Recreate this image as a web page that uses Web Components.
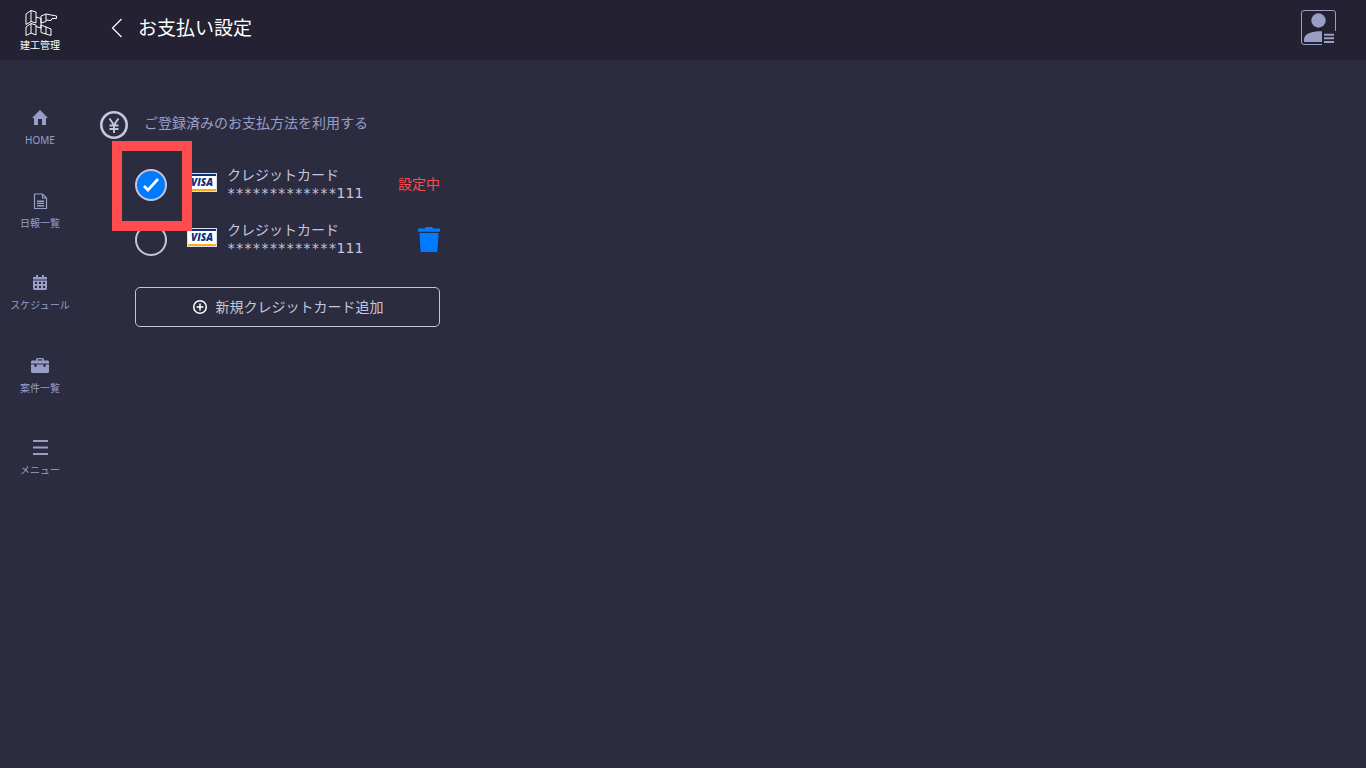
<!DOCTYPE html>
<html lang="ja">
<head>
<meta charset="utf-8">
<meta name="viewport" content="width=device-width, initial-scale=1">
<title>お支払い設定</title>
<style>
    body {
        --bar: #232132;
        --page: #2c2c41;
        --muted: #9a9ec7;
        --line: #c5c6dc;
        --blue: #007bff;
        --red: #ff4d4f;
        margin: 0;
        background: var(--page);
        color: var(--line);
        font-family: "Noto Sans", "Noto Sans CJK JP", sans-serif;
        font-size: 14px;
        line-height: 18px;
    }
</style>
</head>
<body>
<payment-app></payment-app>

<template id="app-header-template">
    <style>
        :host { display: block; background: var(--bar); color: #fff; }
        header { display: flex; align-items: center; height: 60px; padding-right: 30px; }
        svg { display: block; fill: none; stroke: currentColor; }
        .logo {
            display: flex; flex-direction: column; align-items: center;
            width: 80px; padding-top: 2px; color: #fff; text-decoration: none;
            font-size: 10px; line-height: 16px;
        }
        .back { margin-left: 27px; padding: 4px; border: 0; background: none; color: #fff; cursor: pointer; }
        h1 { flex: 1; margin: 0 0 4px 11px; font-size: 19px; font-weight: 400; line-height: 28px; }
        .back, .user { margin-bottom: 5px; }
        .user { padding: 0; border: 0; background: none; color: var(--muted); cursor: pointer; }
    </style>
    <header>
        <a class="logo" href="#">
            <svg width="36" height="28" viewBox="0 0 36 28" stroke-width="1">
                <path d="M4 5L9 1.5 14 3V14L9 12.500 4 15.500zM9 1.500V12.500M4 18L9 14.500 14 16V26L9 24 4 26.500zM9 14.500V24"/>
                <path d="M14 8L19 9.500V19L14 17.500M19 7L24 5V12.500L19 14zM24 5L34.500 7V9.500H30L29 11.500 24 11M19 16L29 20V26.500L19 23.500zM24 18V25"/>
            </svg>
            <span>建工管理</span>
        </a>
        <button class="back" aria-label="戻る">
            <svg width="12" height="20" viewBox="0 0 12 20" stroke-width="1.200"><path d="M10.500 1L1.500 10 10.500 19"/></svg>
        </button>
        <h1><slot></slot></h1>
        <button class="user" aria-label="アカウント">
            <svg width="36" height="36" viewBox="0 0 36 36">
                <path d="M35.500 21V3Q35.500 .5 33 .5H4Q1.500 .5 1.500 3V32Q1.500 34.500 4 34.500H22"/>
                <g fill="currentColor" stroke="none">
                    <circle cx="18.500" cy="10.500" r="7.200"/>
                    <path d="M4 32V29C5 23 13 21 22 21.200V32zM24 23.700h10v2H24zM24 27.300h10v2H24zM24 31h10v2H24z"/>
                </g>
            </svg>
        </button>
    </header>
</template>

<template id="side-link-template">
    <style>
        :host { display: block; }
        a {
            display: flex; flex-direction: column; align-items: center; gap: 4px;
            color: var(--muted); text-decoration: none; font-size: 10px; line-height: 16px;
        }
        ::slotted(svg) { display: block; width: 20px; height: 20px; fill: currentColor; }
    </style>
    <a href="#"><slot name="icon"></slot><span><slot></slot></span></a>
</template>

<template id="card-option-template">
    <style>
        :host { display: block; }
        .row { display: flex; align-items: center; height: 40px; }
        .pick { position: relative; display: flex; }
        input {
            appearance: none; box-sizing: border-box; width: 32px; height: 32px; margin: 0;
            border: 2px solid var(--line); border-radius: 50%; cursor: pointer;
        }
        input:checked { background: var(--blue); }
        input:checked::before {
            content: ""; display: block; width: 28px; height: 28px; background: #fff;
            clip-path: polygon(6px 16px, 8px 14px, 11px 17px, 20px 7px, 22px 9px, 11px 21px);
        }
        /* frame drawn around the highlighted option */
        .frame {
            display: none; position: absolute; z-index: 1; inset: -28px -25px -30px -23px;
            border: 10px solid var(--red); pointer-events: none;
        }
        :host([highlight]) .frame { display: block; }
        .visa { display: block; margin: 0 10px 4px 20px; }
        label { flex: 1; padding-bottom: 3px; cursor: pointer; }
        label span { display: block; }
        .number { font-family: "DejaVu Sans", sans-serif; }
        .number .mask { display: inline; font-family: "DejaVu Sans Mono", monospace; }
    </style>
    <div class="row">
        <div class="pick"><input type="radio" id="pick"><div class="frame"></div></div>
        <svg class="visa" width="30" height="20" viewBox="0 0 30 20" aria-hidden="true">
            <path fill="#dcdde6" d="M0 0h30v19H0z"/>
            <path fill="#fff" d="M1 3h28v13H1z"/>
            <path fill="#0b2f7b" d="M1 1h28v2H1z"/>
            <path fill="#f9ad19" d="M1 16h28v2H1z"/>
            <text x="15" y="13" text-anchor="middle" fill="#0b2f7b" font-family="Open Sans, sans-serif" font-size="10" font-weight="800" font-style="italic">VISA</text>
        </svg>
        <label for="pick"><span><slot></slot></span><span class="number"></span></label>
        <slot name="action"></slot>
    </div>
</template>

<template id="payment-app-template">
    <style>
        :host { display: block; }
        .body { display: flex; }
        nav {
            display: flex; flex-direction: column; justify-content: space-between;
            width: 80px; height: 370px; margin-top: 48px;
        }
        main { flex: 1; padding: 51px 20px; }
        .title { display: flex; align-items: center; gap: 16px; color: var(--muted); }
        .title svg { color: var(--line); }
        h2 { margin: 0 0 4px; font-size: 14px; font-weight: 400; }
        .methods { max-width: 305px; margin: 26px 0 0 35px; }
        .cards { display: flex; flex-direction: column; gap: 15px; margin-bottom: 27px; }
        .status { padding-bottom: 2px; color: var(--red); }
        .delete { padding: 0; border: 0; background: none; color: var(--blue); cursor: pointer; }
        .delete svg { display: block; }
        .add {
            display: flex; align-items: center; justify-content: center; gap: 8px;
            box-sizing: border-box; width: 100%; height: 40px;
            border: 1px solid var(--line); border-radius: 5px;
            background: none; color: inherit; font: inherit; cursor: pointer;
        }
        .add svg { color: #fff; }
    </style>
    <app-header>お支払い設定</app-header>
    <div class="body">
        <nav>
            <side-link>
                <svg slot="icon" viewBox="0 0 20 20"><path d="M10 2L18 10H16V17H12V11H8V17H4V10H2z"/></svg>
                HOME
            </side-link>
            <side-link>
                <svg slot="icon" viewBox="0 0 20 20"><path d="M4.500 3H12.500L16.500 7V17.500H4.500zM12.500 3V7H16.500" fill="none" stroke="currentColor" stroke-width="1.200"/><path d="M7 9.500h7V11H7zM7 11.800h7v1.200H7zM7 14h7v1.500H7z"/></svg>
                日報一覧
            </side-link>
            <side-link>
                <svg slot="icon" viewBox="0 0 20 20"><path fill-rule="evenodd" d="M3 4H6V2H8V4H12V2H14V4H17V6.500H3zM3 7.500H17V15.500Q17 17 15.500 17H4.500Q3 17 3 15.500zM5 9V11H7V9zM9 9V11H11V9zM13 9V11H15V9zM5 13V15H7V13zM9 13V15H11V13zM13 13V15H15V13z"/></svg>
                スケジュール
            </side-link>
            <side-link>
                <svg slot="icon" viewBox="0 0 20 20"><path fill-rule="evenodd" d="M6 4.500V3L7 2H13L14 3V4.500H18L19 5.500V7.500H1V5.500L2 4.500zM7.500 4.500H12.500V3.200H7.500zM1 8.500H4.500V11H6.500V8.500H13.500V11H15.500V8.500H19V16L18 17H2L1 16z"/></svg>
                案件一覧
            </side-link>
            <side-link>
                <svg slot="icon" viewBox="0 0 20 20"><path d="M3 2h15v2H3zM3 8.500h15v2H3zM3 15h15v2H3z"/></svg>
                メニュー
            </side-link>
        </nav>
        <main>
            <div class="title">
                <svg width="28" height="28" viewBox="0 0 28 28" fill="none" stroke="currentColor" aria-hidden="true">
                    <circle cx="14" cy="14" r="12.700" stroke-width="2.600"/>
                    <path d="M9.500 7.500L14 14 18.500 7.500M14 14V22M9.500 14.500H18.500M9.500 18H18.500" stroke-width="1.900"/>
                </svg>
                <h2>ご登録済みのお支払方法を利用する</h2>
            </div>
            <div class="methods">
                <div class="cards">
                    <card-option number="*************111" checked highlight>
                        クレジットカード
                        <span class="status" slot="action">設定中</span>
                    </card-option>
                    <card-option number="*************111">
                        クレジットカード
                        <button class="delete" slot="action" aria-label="削除">
                            <svg width="22" height="26" viewBox="0 0 22 26" fill="currentColor"><path d="M0 1.500H6.500L8 0H14L15.500 1.500H22V4.800H0zM1.500 6H20.500L19.500 23.500Q19.400 25 18 25H4Q2.600 25 2.500 23.500z"/></svg>
                        </button>
                    </card-option>
                </div>
                <button class="add">
                    <svg width="16" height="16" viewBox="0 0 16 16" fill="none" stroke="currentColor" stroke-width="1.500"><circle cx="8" cy="8" r="6.300"/><path d="M8 4.500V11.500M4.500 8H11.500"/></svg>
                    新規クレジットカード追加
                </button>
            </div>
        </main>
    </div>
</template>

<script>
    class BaseElement extends HTMLElement {
        constructor() {
            super();
            const template = document.getElementById(this.localName + '-template');
            this.attachShadow({ mode: 'open' });
            this.shadowRoot.appendChild(template.content.cloneNode(true));
        }
    }

    class AppHeader extends BaseElement {}

    class SideLink extends BaseElement {}

    class CardOption extends BaseElement {
        connectedCallback() {
            const number = this.getAttribute('number') || '';
            const digits = number.replace(/\*/g, '');
            const mask = document.createElement('span');
            mask.className = 'mask';
            mask.textContent = number.slice(0, number.length - digits.length);
            this.shadowRoot.querySelector('.number').replaceChildren(mask, digits);

            this.input = this.shadowRoot.querySelector('input');
            this.input.checked = this.hasAttribute('checked');
            this.input.addEventListener('change', () => {
                this.dispatchEvent(new CustomEvent('card-select', { bubbles: true }));
            });
        }
    }

    class PaymentApp extends BaseElement {
        connectedCallback() {
            // radios live in separate shadow roots, so keep them exclusive here
            this.shadowRoot.addEventListener('card-select', (event) => {
                this.shadowRoot.querySelectorAll('card-option').forEach((card) => {
                    card.input.checked = card === event.target;
                });
            });
        }
    }

    customElements.define('app-header', AppHeader);
    customElements.define('side-link', SideLink);
    customElements.define('card-option', CardOption);
    customElements.define('payment-app', PaymentApp);
</script>
</body>
</html>
